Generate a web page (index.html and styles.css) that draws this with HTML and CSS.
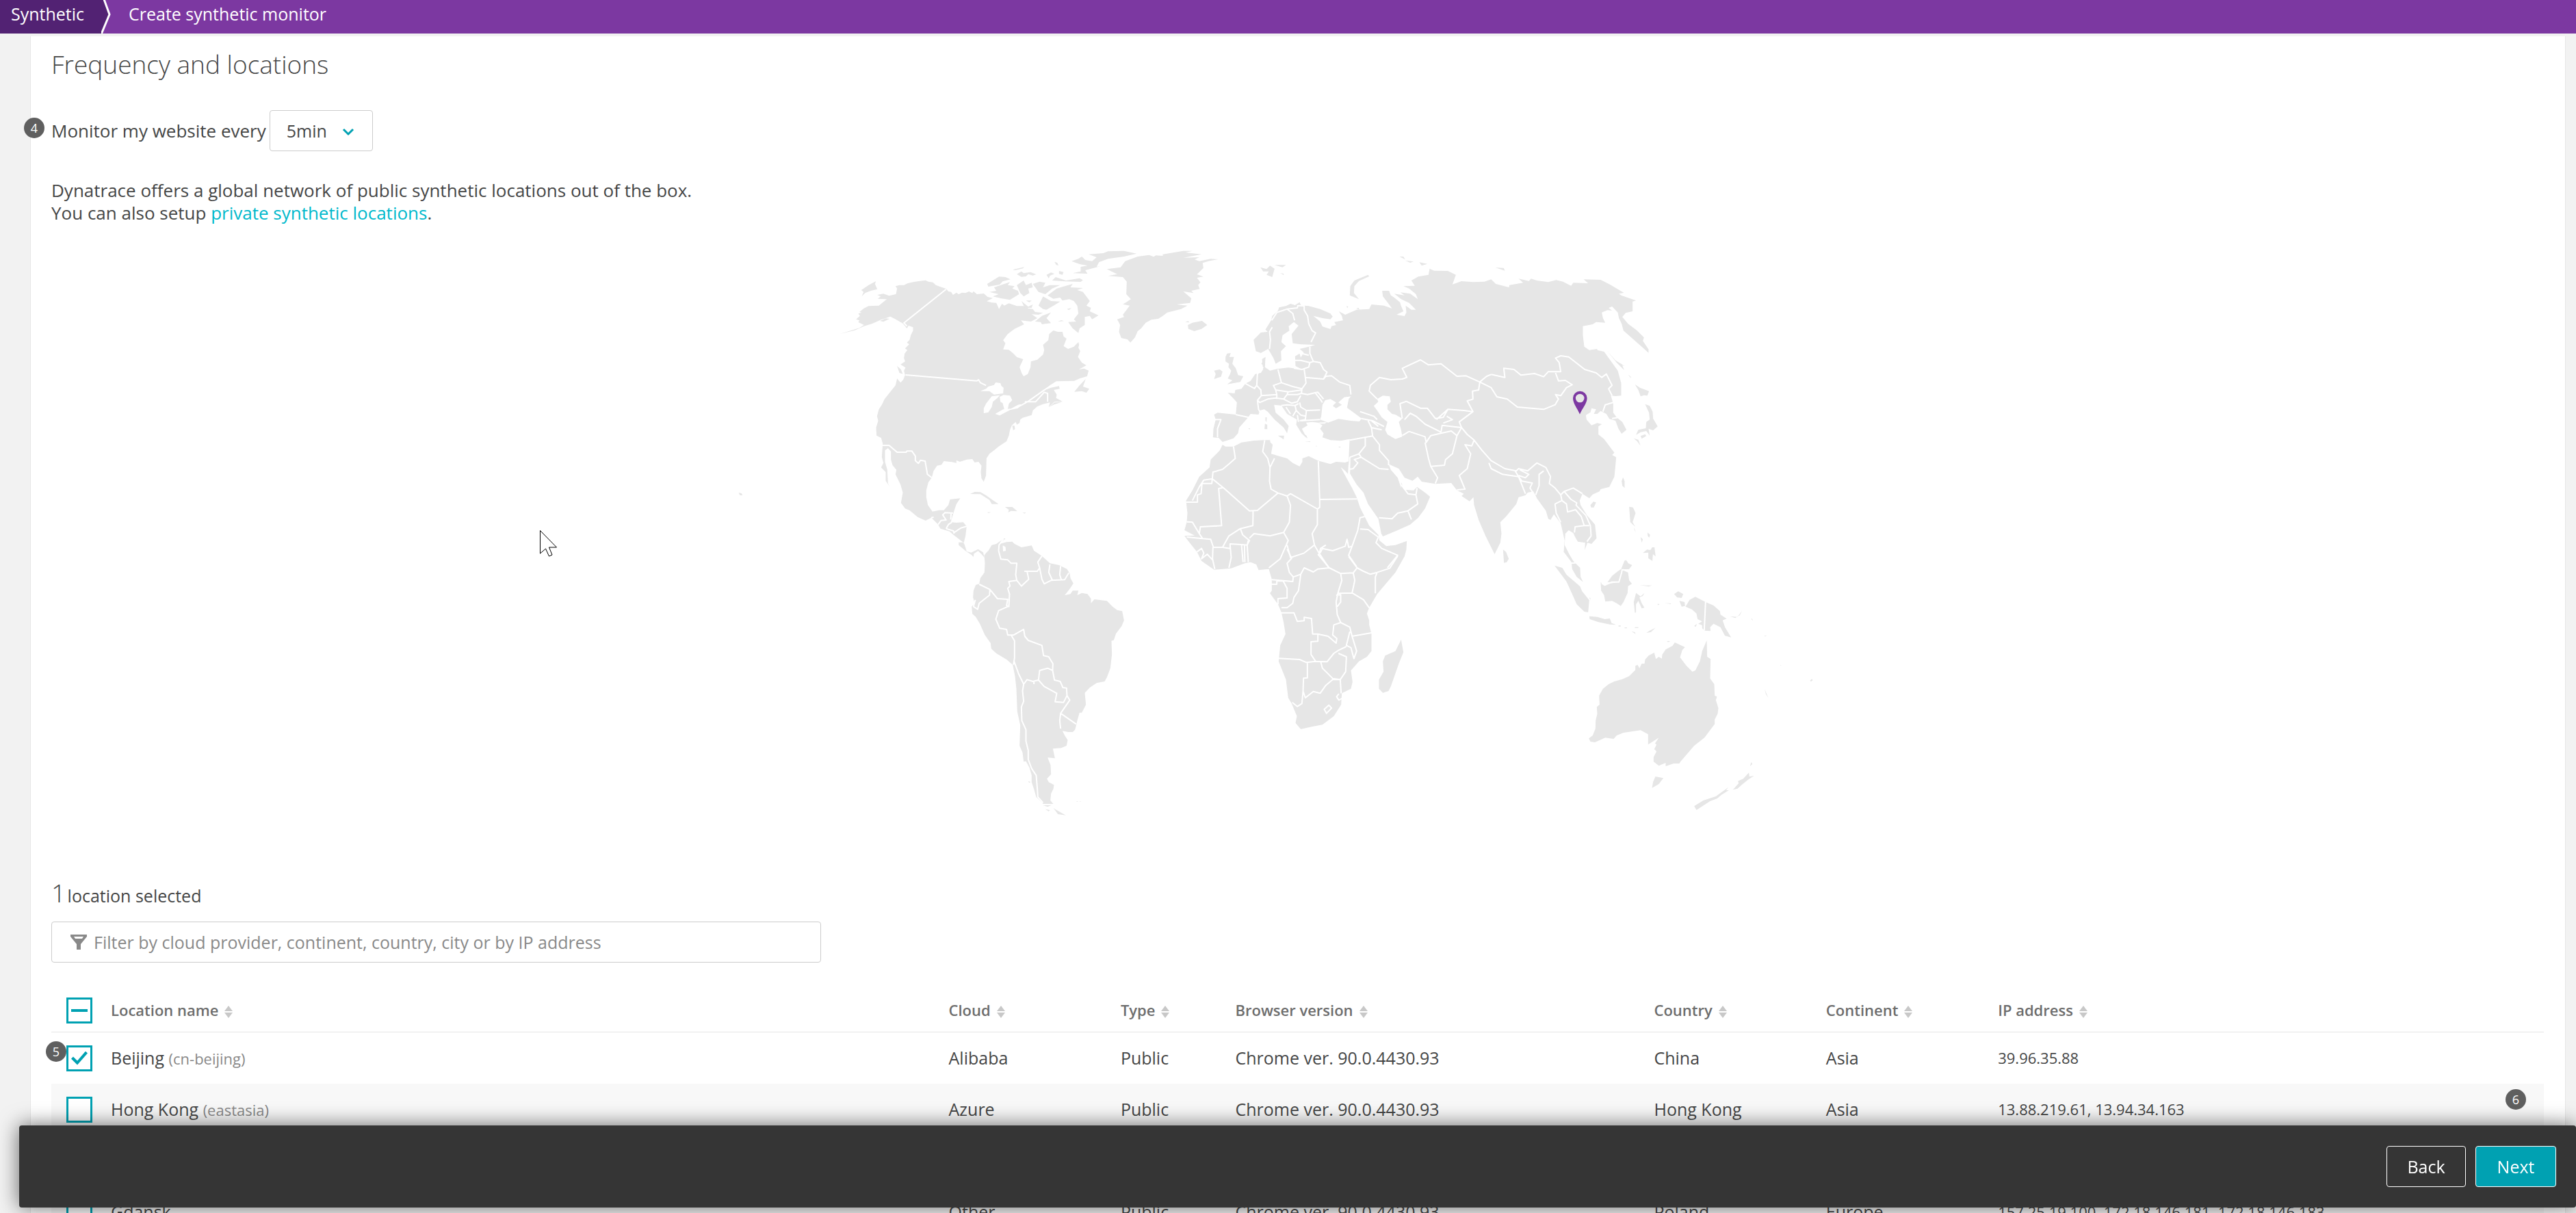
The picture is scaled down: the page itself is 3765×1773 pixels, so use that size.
FILE: index.html
```html
<!DOCTYPE html>
<html lang="en">
<head>
<meta charset="utf-8">
<title>Create synthetic monitor</title>
<link rel="stylesheet" href="styles.css">
</head>
<body>
<svg width="0" height="0" class="defs" aria-hidden="true">
  <symbol id="sort" viewBox="0 0 12 18"><path d="M0 8L6 0l6 8zM0 10h12l-6 8z" fill="#c8c8c8"/></symbol>
</svg>
<div class="app">
  <nav class="crumbs">
    <a class="crumb crumb-root" href="#">Synthetic</a>
    <svg class="crumb-arrow" width="15" height="49" viewBox="0 0 15 49"><path d="M0 0h4l8 21L0 49z" fill="#522273"/><path d="M4 -1L12 21 0 50" fill="none" stroke="#fff" stroke-width="3"/></svg>
    <a class="crumb" href="#">Create synthetic monitor</a>
  </nav>
  <main class="card">
    <h1>Frequency and locations</h1>
    <div class="frequency">
      <span class="badge badge-frequency">4</span>
      <label for="interval">Monitor my website every</label>
      <div class="select">
        <select id="interval"><option>5min</option></select>
        <svg width="18" height="12" viewBox="0 0 18 12"><path d="M2 2l7 7 7-7" fill="none" stroke="#00a1b2" stroke-width="3"/></svg>
      </div>
    </div>
    <p class="intro">Dynatrace offers a global network of public synthetic locations out of the box.<br>You can also setup <a href="#">private synthetic locations</a>.</p>

    <svg class="map" viewBox="1067 340 1660 900" role="img" aria-label="World map of locations">
      <g transform="translate(1220 350) scale(.33333)">
        <!-- North America -->
        <g class="land">
          <path d="M268 205L285 200 305 200 320 193 345 187 375 182 400 179 412 185 432 188 445 200 465 208 490 216 500 228 512 230 520 243 535 233 545 240 560 233 575 235 590 228 605 235 610 227 625 240 655 237 672 252 695 257 668 271 690 277 710 278 722 305 735 282 745 290 765 280 800 292 835 292 850 302 870 305 880 318 915 322 895 330 865 328 890 345 862 360 818 355 832 372 790 392 760 415 740 442 750 455 740 482 765 484 785 500 800 516 828 525 812 560 822 588 830 600 848 590 860 560 862 535 890 527 915 505 920 485 915 462 938 442 942 415 960 399 980 405 1000 405 1005 425 1018 435 1005 468 1025 480 1050 470 1070 450 1073 462 1070 475 1078 490 1068 515 1085 540 1105 552 1072 570 1095 566 1115 575 1108 600 1075 610 1052 620 975 622 945 640 922 660 950 650 985 643 988 655 962 660 975 680 972 695 1000 710 965 712 940 735 945 715 915 722 890 732 870 750 865 770 825 782 815 790 812 805 800 812 795 800 778 815 770 835 765 860 755 885 740 895 720 908 700 925 680 940 667 960 665 1035 655 1063 645 1048 642 1020 645 992 632 975 615 978 605 963 580 965 550 975 535 968 535 980 515 976 480 972 470 988 450 992 435 1015 427 1045 412 1065 403 1100 403 1130 410 1165 430 1193 460 1187 480 1187 500 1165 507 1140 552 1135 535 1160 525 1190 510 1240 535 1242 565 1240 580 1258 575 1300 568 1328 580 1368 600 1373 630 1358 652 1372 658 1395 645 1380 630 1366 612 1378 610 1392 600 1382 578 1368 545 1340 545 1328 565 1328 522 1295 505 1280 465 1268 455 1250 425 1220 400 1233 365 1217 330 1188 310 1180 292 1155 300 1110 290 1075 268 1030 272 1010 255 990 248 965 248 930 235 915 222 925 222 975 232 1010 235 1070 244 1087 225 1058 225 1020 205 1000 215 980 208 955 212 895 205 870 185 860 183 825 192 795 187 775 195 745 208 725 220 700 250 662 268 640 275 610 290 628 302 615 310 595 305 575 312 562 290 548 310 535 305 520 308 500 320 485 310 478 328 460 318 452 330 440 335 420 345 400 345 385 325 378 318 390 300 368 265 348 245 338 205 352 165 370 130 380 90 398 25 414 110 388 130 375 105 363 110 355 95 350 112 335 105 325 120 320 110 318 128 303 150 292 195 290 230 262 190 260 203 250 188 243 215 238 240 247 270 240 275 215z"/>
          <path d="M118 222L150 200 182 183 178 195 188 218 160 225 135 235 120 250 128 230zM200 357L225 346 242 348 215 361zM275 555L292 570 300 590 285 585zM1052 668L1075 640 1102 612 1090 645 1118 655 1105 672 1085 665zM942 735L965 715 1000 712 960 725zM660 663l15-8 10 4zM780 817l10 0 2 15-8 5z"/>
          <path d="M670 195L722 163 750 165 772 175 738 184 725 198 675 207zM680 230L710 225 700 210 770 187 760 200 790 205 780 215 805 225 810 240 770 265 730 258 695 250 720 240zM800 200l30-20 10 20 25-10 5 20-20 5 5 20-25 15-15-15zM782 133l50-12-5 6-35 8zM800 152l20-12 10 8 30-5 25 10-15 5-20-6-10 10-20 2zM930 155l20-10 15 6-20 8-5 12zM965 98l12 4 6 12-10-2zM985 138l20 5-5 12-15-4zM870 195l30-10 25 5-10 20 30-10 45 0-35 15-30 25-30-10zM955 180l15-15 45 15 60-10 15 8-10 8-70-2z"/>
          <path d="M935 245L975 215 1010 205 1045 195 1035 210 1090 213 1065 222 1090 230 1120 270 1105 290 1125 300 1120 315 1158 333 1130 350 1120 335 1098 340 1098 375 1075 390 1070 410 1045 390 1025 362 1060 360 1050 350 1070 325 1065 290 1050 270 1030 262 1000 268 990 255 960 260zM895 290L915 250 950 270 990 272 970 285 930 308 915 305zM820 270l30 25 20-10-5 15-30 0zM840 268l25 0-10 8zM880 360l30-25 40-15-20 25 20 22-40 5-5-10zM980 360l15-6 12 4zM1020 305l20-5-12 10z"/>
          <path d="M1115 65L1180 60 1200 52 1270 50 1325 62 1270 75 1200 85 1160 100 1150 120 1165 118 1100 135 1110 150 1045 148 1080 140 1080 120 1110 115 1075 108 1040 95 1070 85 1085 75 1100 90 1130 95 1150 78z"/>
          <path d="M595 1116L615 1107 640 1108 665 1122 690 1140 720 1160 690 1160 680 1142 640 1117zM748 1173L780 1173 802 1192 775 1190 762 1197 765 1185zM670 1196l16 0-10 4zM825 1198l15 0-5 4z"/>
        </g>
        <path class="water" d="M640 665L665 655 675 645 700 638 707 627 728 630 732 642 742 650 740 675 700 680 680 665zM665 720L690 688 725 683 715 695 695 712 690 735 675 758 655 762 655 740zM725 690L742 682 770 685 780 705 765 720 760 745 745 745 738 718 728 712zM705 765L740 745 775 742 805 725 820 722 805 740 770 748 725 772z"/>
        <g class="border">
          <path d="M490 218L305 366 318 380M312 594L625 620 632 615 640 628 665 640M800 738L850 710 925 657 975 624M835 712H882L920 670 935 675 935 712M210 903H240L275 933H315L318 928H340L355 950 355 970 368 982 378 968 398 972 408 1030 427 1045M425 1220L435 1218M455 1250L468 1232 490 1230 475 1208 485 1198 520 1200M510 1228L512 1200M490 1268L500 1250 515 1240M490 1268L522 1278 525 1290M525 1285L555 1265 580 1258M568 1328L580 1345"/>
        </g>
        <!-- Greenland -->
        <path class="land" d="M1275 95L1330 75 1380 68 1400 76 1410 70 1440 72 1440 65 1530 50 1570 50 1540 57 1610 65 1530 80 1600 78 1580 88 1600 95 1650 85 1682 87 1640 95 1615 103 1618 125 1590 153 1618 163 1590 168 1605 188 1595 200 1602 217 1565 225 1575 235 1530 228 1565 258 1560 278 1500 285 1548 290 1520 305 1460 320 1440 335 1420 348 1390 352 1365 365 1345 390 1330 402 1318 430 1298 452 1285 438 1258 432 1248 405 1253 375 1240 350 1270 340 1265 330 1295 290 1265 284 1280 275 1300 262 1280 240 1282 185 1265 165 1200 160 1240 152 1215 140 1195 130 1255 122z"/>

        <!-- Europe, Asia and northern Africa -->
        <g transform="translate(1440 0)">
          <g class="land">
            <path d="M510 298L540 292 560 282 580 288 600 275 605 287 620 290 640 292 690 305 735 325 745 338 735 350 700 345 660 335 690 360 700 382 735 393 740 380 760 375 752 362 790 355 785 335 772 315 800 330 850 308 905 305 915 285 970 290 1005 303 985 275 965 250 962 225 992 225 1000 245 1015 255 1040 275 1045 292 1055 315 1025 330 1060 336 1068 320 1065 290 1090 308 1110 308 1080 278 1045 262 1015 238 1060 245 1042 232 1085 238 1118 262 1110 240 1080 215 1055 205 1105 203 1090 180 1120 163 1165 155 1170 128 1190 137 1250 138 1285 155 1270 197 1310 183 1360 187 1410 185 1440 175 1460 195 1518 210 1520 200 1580 190 1560 172 1605 182 1615 172 1640 180 1690 187 1725 178 1755 185 1790 203 1800 190 1865 192 1845 175 1920 177 1960 197 2022 234 2000 238 2010 245 2075 268 2060 272 2060 315 2030 322 2015 340 2040 370 2078 398 2110 430 2105 445 2130 482 2130 497 2060 435 2020 400 2012 370 2000 345 1995 320 1970 294 1955 300 1970 312 1950 310 1925 320 1930 345 1940 365 1900 362 1885 372 1842 380 1842 420 1848 470 1870 485 1905 480 1905 485 1935 492 1955 520 1995 575 2010 630 2010 685 1985 687 1965 685 1975 720 1975 760 1990 780 2015 800 2033 835 2012 852 1998 830 1985 795 1958 787 1945 765 1920 752 1905 765 1890 765 1900 745 1880 740 1875 758 1855 770 1858 790 1880 815 1905 805 1925 810 1910 820 1910 855 1935 875 1960 908 1980 935 1970 945 1988 955 1985 990 1980 1040 1958 1085 1920 1095 1915 1105 1885 1118 1870 1135 1840 1115 1828 1145 1832 1165 1860 1210 1895 1250 1902 1310 1880 1335 1862 1330 1850 1362 1852 1330 1820 1325 1808 1305 1800 1288 1780 1275 1765 1290 1762 1340 1785 1385 1800 1410 1830 1440 1832 1480 1843 1502 1815 1480 1795 1445 1792 1415 1758 1370 1762 1320 1745 1245 1715 1205 1700 1230 1690 1225 1680 1190 1640 1135 1625 1105 1600 1110 1590 1122 1560 1130 1550 1160 1505 1215 1480 1240 1485 1290 1480 1330 1455 1380 1440 1350 1415 1300 1385 1230 1365 1165 1362 1130 1345 1148 1310 1125 1320 1115 1290 1100 1265 1068 1195 1072 1135 1062 1118 1040 1095 1058 1060 1045 1035 1005 990 985 1000 1010 1030 1045 1045 1090 1045 1065 1060 1098 1100 1100 1115 1085 1150 1110 1172 1128 1150 1180 1120 1220 1085 1250 1030 1275 965 1302 958 1290 945 1225 900 1160 880 1110 850 1075 820 1025 815 970 818 900 820 875 780 883 735 880 700 868 705 850 690 830 700 815 680 803 655 800 628 803 635 815 610 830 632 872 608 850 585 812 588 790 545 765 520 728 488 725 495 760 530 790 552 818 545 850 530 825 490 790 460 755 445 745 425 750 420 768 385 765 370 785 335 825 330 850 310 872 262 888 245 870 220 868 222 830 232 790 225 768 240 760 320 768 325 715 312 700 285 672 315 675 318 660 345 655 362 632 385 620 405 590 430 585 440 570 435 525 450 515 448 560 470 575 500 568 550 562 610 570 582 555 580 512 600 500 605 518 618 495 600 480 650 468 668 462 605 460 570 455 565 415 595 378 575 362 552 380 555 400 525 420 520 450 540 468 518 490 520 530 495 545 485 520 462 480 430 498 408 490 398 440 430 408 460 405 450 395 475 355 480 335 505 312z"/>
            <path d="M110 375L130 365 172 357 195 375 170 392 138 402 112 392zM98 362l14-4 4 6zM275 515L282 500 298 498 292 515 312 515 305 545 320 565 330 595 353 600 340 625 282 635 305 618 285 610 295 590 300 575 288 560 290 545 275 535zM225 575L250 570 262 580 255 602 225 612 232 590zM432 545L450 515 445 555zM505 860L532 860 530 877zM448 808L458 812 458 832 446 832zM450 780l6 0-1 20-5-5zM375 828l8 0-3 5zM670 905l5 0-1 4zM615 850l15 10 5 12-12-8zM770 908l12 1-8 4zM622 885l25 0 0 3z"/>
            <path d="M428 122L455 130 470 115 490 128 480 165 455 155 465 140 440 140zM490 112L540 112 525 122zM515 148l15 2 0 6zM820 245L822 205 840 180 900 155 905 162 860 182 840 205 838 235 860 262zM1038 75L1055 75 1063 88zM1063 92L1100 97 1085 102zM1125 100L1160 107 1135 115zM1458 123L1495 125 1500 137zM805 293l8 0-3 8zM848 303l10-3 5 8z"/>
            <path d="M1948 488L1985 530 2025 555 2015 552 2023 573 1990 540zM2040 592l12 10 0 6zM2070 635L2092 650 2132 665 2125 685 2110 683 2095 688 2085 660zM2115 722L2135 730 2148 755 2150 785 2170 820 2150 837 2130 830 2135 860 2120 840 2095 845 2075 857 2085 835 2118 828 2120 800 2135 790 2132 760zM2095 862l20-8 5 8-20 12zM2065 872L2085 878 2095 905 2080 885zM2012 1060L2018 1043 2025 1060 2025 1090 2015 1080zM1875 1165L1888 1150 1900 1153 1890 1175 1878 1175zM1492 1360L1505 1370 1517 1400 1508 1415 1496 1418z"/>
            <path d="M2045 1172L2062 1175 2073 1200 2060 1240 2072 1260 2050 1240 2048 1215zM2066 1262l8 22-6-10zM2095 1305l10 10-5 15zM2125 1285l12 10-4 12-6-6zM2105 1375l18-15 15 2 8-12 10 0 5 40-12-10-2 30-18-12 0-25zM2012 1440L2025 1408 2035 1410 2045 1430 2055 1430 2040 1440z"/>
            <path d="M262 900L275 908 310 908 345 890 400 882 445 880 470 880 472 890 482 900 475 940 510 950 545 960 570 980 600 995 612 975 612 960 640 950 680 970 735 985 760 975 800 978 815 973 812 1028 800 1015 780 998 805 1045 830 1090 850 1130 865 1175 885 1215 905 1255 945 1295 950 1320 980 1345 1020 1340 1070 1322 1068 1360 1060 1390 1020 1460 940 1555 905 1615 895 1640 905 1670 905 1690 915 1730 915 1805 895 1830 860 1850 825 1890 832 1940 825 1970 785 1990 782 2040 750 2090 700 2128 660 2135 605 2147 582 2120 588 2090 565 2035 550 2010 540 1930 508 1850 515 1780 538 1730 530 1680 520 1635 505 1600 470 1552 478 1540 478 1490 465 1445 420 1450 410 1425 385 1415 360 1420 300 1442 225 1448 170 1410 150 1370 110 1320 95 1300 140 1298 95 1275 105 1240 108 1200 102 1145 130 1100 160 1040 205 1000 210 965 250 925z"/>
            <path d="M1045 1755L1055 1810 1035 1860 1000 1960 990 1980 965 1988 948 1970 948 1930 968 1895 965 1850 975 1825 1020 1805z"/>
          </g>
          <path class="water" d="M940 700L965 685 995 688 1000 712 985 725 985 745 1005 765 1020 768 1050 785 1035 800 1045 835 1050 865 1020 875 985 855 975 835 985 800 960 780 940 750 925 730 945 712zM695 775L690 790 725 803 770 787 825 795 862 798 872 785 845 765 808 738 815 700 825 688 795 692 770 715 785 725 760 740 745 730 760 715 735 700 712 705 700 725zM680 803l40-2-10 7-20 0z"/>
          <g class="border">
            <path d="M480 385L468 405 472 440 468 480M478 355L500 320 525 312 545 305 570 325 578 355M545 305L590 300 592 290 620 292 620 310 635 335 640 370 655 400 670 410 650 450M645 470L645 500 660 535 645 540 605 530 580 530M590 495L640 508M575 565L610 570 640 560 645 540M660 535L690 540 705 570 720 582 705 612 625 605 620 570M705 612L715 600 740 598 775 625 820 640 825 680M625 605L628 630 610 655 608 675 635 680 668 672 690 700 700 715M668 672L680 670 705 700M610 655L570 645 520 628 505 570M520 628L485 640 495 660 550 668 610 660M495 660L500 680 430 685M440 560L415 590 412 640 400 655M412 640L430 660 432 685 415 705M362 632L405 655M415 705L425 715 460 700 495 695 530 700 545 680 550 668M500 680L500 700M545 680L590 680 608 675M415 705L420 745 425 755M530 700L565 718 590 712 605 685M600 715L605 735 630 750 690 748M630 750L625 790 600 795M520 728L545 725 580 728 585 750 570 775M540 735L560 765M580 728L595 720M585 750L605 770 625 775M590 770L595 800M605 795L690 790M320 768L375 780M228 790L255 790 240 830 240 868M865 755L925 775 940 790M870 785L920 795 970 820M900 795L915 825 960 835M915 795L945 820M820 880L920 862 915 825M920 862L950 900 950 925 990 970 990 990M888 870L888 905 860 940 820 955M860 940L870 955 950 1005 990 1008M870 955L840 965 855 980 835 1005 818 1008M820 955L818 1028M1045 1075L1075 1115 1110 1120 1115 1090M1110 1120L1118 1160 1075 1190 1090 1228M1075 1190L1030 1200 1005 1225 948 1220"/>
            <path d="M940 700L905 665 910 640 950 605 1000 615 1050 612 1070 605 1050 565 1130 528 1165 550 1220 545 1290 600 1330 598 1390 625 1420 600 1440 592M1390 625L1440 650 1465 690 1510 700 1555 735 1670 745 1720 725 1735 700 1722 680 1745 685 1770 650 1795 637 1765 618 1735 620 1722 585M1440 592L1500 605 1495 565 1540 570 1570 595 1630 588 1670 602 1690 580 1745 580 1738 540 1722 520 1745 510 1780 515 1850 570 1900 585 1925 605 1945 590 1970 640 1955 655 1970 685M1390 625L1385 660 1358 665 1360 700 1335 708 1360 755 1320 750 1250 745 1200 790M1050 785L1040 720 1068 710 1130 740 1160 740 1195 785 1230 780 1250 745M1060 790L1085 762 1110 775 1150 810 1220 845M1360 755L1300 800 1310 825 1225 815 1220 845M1245 775L1270 790 1230 805M1050 860L1080 842 1150 865 1155 890 1175 860 1220 850 1265 840 1290 860 1270 940 1240 965 1235 990 1175 995 1205 1045 1195 1070M1150 890L1165 960 1175 995M1290 860L1310 825 1335 855 1365 880 1355 905 1325 900 1350 940 1335 1005 1300 1035 1325 1095 1290 1098M1365 880L1400 925 1440 970 1500 1005 1550 1015 1560 1005 1600 1015 1640 980 1680 1000 1700 1040 1695 1070 1720 1090 1745 1120 1760 1105 1800 1090 1840 1115M1430 980L1440 1005 1490 1030 1560 1040 1545 1015M1560 1040L1590 1115M1560 1040L1575 1060 1620 1068 1610 1090 1635 1130M1565 1010L1605 1030 1590 1045 1560 1035M1635 1120L1650 1080 1650 1030 1670 1015M1745 1120L1750 1145 1720 1160 1725 1200 1745 1240M1750 1145L1770 1160 1775 1195 1810 1185 1835 1215 1848 1255 1808 1260 1805 1285M1760 1105L1790 1140 1815 1155 1812 1165 1855 1210 1875 1255 1878 1300 1860 1325M1848 1255L1870 1255M1975 715L1940 725 1930 755M1970 785L2000 780"/>
            <path d="M310 908L318 960 290 985 262 1008 220 1020 215 1070 172 1070 168 1115 152 1120 152 1152 102 1152M215 1050L180 1055 160 1085 130 1145M215 1048L265 1088 380 1190 415 1188 505 1112 475 1095 468 1060 470 1000 460 960 438 930 447 880M470 1000L490 960M505 1112L545 1125 560 1115 678 1182 688 1175 688 1140 682 972M688 1140L852 1138M265 1088L245 1092 258 1255 165 1260 160 1290 130 1240 105 1238M396 1190L395 1255 340 1268 290 1300 262 1350 222 1350 210 1315 175 1312 160 1290M175 1312L105 1305M395 1255L340 1268 350 1295 380 1320 370 1340 375 1415M545 1125L560 1165 555 1240 530 1285 550 1320 515 1400 465 1440M380 1310L400 1290 470 1300 530 1285M678 1182L678 1250 655 1290 665 1340 620 1375 560 1395 545 1340M665 1340L685 1375 725 1435M690 1375L700 1355 745 1365 800 1345 808 1315 815 1350 830 1345 855 1275 865 1220 885 1215M865 1270L900 1272 945 1305 935 1330 960 1355 1030 1385 985 1440M830 1345L815 1385 850 1435M262 1350L295 1355 295 1335 345 1338 352 1415M345 1338L370 1340 375 1320M295 1340L300 1395 290 1440M220 1350L218 1400 228 1445M150 1370L170 1355 180 1375 170 1400 195 1380 218 1405M360 1415L358 1340"/>
          </g>
        </g>
      </g>

      <!-- Southern Africa borders -->
      <g class="border" transform="translate(1720 780) scale(.33333)">
        <path d="M485 68L505 108 485 130 495 170 512 190 545 178 560 150 600 168 620 155 670 150 620 90M512 190L510 210 418 202M545 178L535 250 515 280 510 305 485 325 460 325M670 150L720 175 725 205 708 260 700 300 705 355 720 390 760 410 770 450 855 435M720 175L775 172 792 150 820 165 850 178 880 170M655 50L632 65 625 90M792 150L755 100M880 170L935 152 970 98M880 170L872 190 872 262M775 172L782 205 770 260 708 262M770 260L820 290 845 325M415 222H440V208H468L485 240 485 282 445 285 445 310M700 270L720 268 720 300 705 320M460 347H515L530 385 560 382 560 367 592 372 597 440 620 440 620 472 590 474 590 530 610 560 570 565 540 552 448 547M620 440L665 450 700 480 703 460 685 445 690 400 720 390M770 450L790 515 778 548 765 500 745 490 760 430M745 495L710 512 690 525 660 562 610 560M710 525L745 540 742 605 718 640 685 635 640 590 632 560M574 565L574 632 557 634 555 690 565 720 600 692 630 700 655 665 685 640 718 640 722 700M555 690L550 745 530 758 508 740M712 702L702 715 712 730 727 722M648 770L668 752 680 765 658 788z"/>
      </g>

      <!-- South America -->
      <g transform="translate(1360 740) scale(.33333)">
        <path class="land" d="M237 215L245 205 255 195 270 170 290 165 325 140 330 142 305 165 335 157 360 155 370 165 400 180 445 172 455 195 475 208 490 218 525 250 565 258 600 275 612 295 615 315 628 338 612 362 590 390 615 385 625 370 650 370 645 390 665 380 690 385 705 405 705 425 720 408 775 415 800 440 820 455 842 460 850 500 840 525 815 558 805 587 795 590 797 650 790 710 775 750 765 768 730 775 700 795 678 818 683 870 665 905 655 905 645 940 640 962 635 980 625 990 605 990 580 985 590 1005 603 1025 598 1050 575 1060 538 1063 547 1105 515 1102 528 1135 530 1175 512 1195 520 1210 543 1222 540 1240 530 1260 527 1290 540 1305 495 1305 490 1298 465 1275 455 1240 445 1210 445 1180 435 1145 420 1118 410 1120 405 1080 392 1050 395 960 382 900 378 800 372 745 362 695 335 672 290 645 268 625 265 600 240 565 218 515 200 485 185 472 182 440 195 425 188 400 190 370 200 345 215 340 220 315 238 290 240 250zM495 1311L532 1310 515 1318zM540 1322L550 1330 595 1355 560 1350zM505 1328l20 4-5 6zM430 1205l10 4-6 4zM640 1295l6-2 2 3zM655 1293l6 2-4 2z"/>
        <path class="water" d="M318 172L330 178 332 195 320 198z"/>
        <path class="border" d="M322 142L302 170 300 195 310 232 340 235 355 250 380 250 375 300 380 325 345 330 350 350 340 360 348 385 345 440 335 435 340 408 295 405 262 365 215 342M380 325L400 350 432 320 425 285 415 285 470 285 480 270 472 245 490 218M480 270L490 320 500 340 530 325 590 322 608 292M525 255L520 290 535 322M572 262L568 300 575 322M262 365L260 390 215 425 208 452 190 440 198 410M340 440L300 458 288 495 305 535 335 540 340 565 365 565 410 540 415 570 430 588 490 610 497 655 520 660 538 690 537 720 545 762 570 768 582 795 598 797 600 830 612 850 572 908 640 955M355 565L370 590 370 665 365 695M368 680L388 735 410 780 405 810 410 855 400 880 402 940 420 980 420 1030 430 1070 430 1110 445 1150 465 1180 470 1240 472 1275 495 1300M410 780L425 760 450 768 475 762 480 720 515 710 537 720M475 762L500 790 555 820 548 857 585 860 600 830M572 908L568 940 572 975M455 770V780"/>
      </g>

      <!-- Oceania and Indonesia -->
      <g transform="translate(2180 740) scale(.33333)">
        <g class="land">
          <path d="M428 1018L445 1005 457 975 458 940 465 910 463 880 475 870 473 830 490 800 515 780 540 768 575 758 605 745 632 718 632 700 642 695 650 710 660 690 672 690 675 672 690 655 715 642 722 670 735 660 748 668 750 650 765 628 795 612 805 597 850 618 838 630 828 662 855 698 882 725 895 720 915 680 925 635 945 588 947 660 962 670 960 755 978 780 980 830 990 835 985 850 996 885 993 910 980 935 980 955 935 1015 890 1050 830 1120 825 1128 800 1128 765 1140 765 1125 735 1138 712 1120 712 1100 725 1075 715 1065 725 1045 718 1040 735 1015 688 1045 688 1000 655 982 615 988 580 993 550 1005 537 1020 500 1015 455 1035 435 1032zM720 1185L755 1192 735 1218 705 1235 710 1208zM890 1315L930 1290 985 1272 1040 1232 1030 1245 1042 1245 1010 1265 990 1282 960 1293 900 1332zM1060 1243L1085 1215 1082 1205 1105 1195 1130 1168 1132 1185 1152 1182 1125 1200 1100 1220 1080 1238zM1135 1140L1140 1122 1145 1130z"/>
          <path d="M852 440L870 410 895 397 940 420 975 435 1003 460 1005 475 1032 493 1015 500 1025 530 1052 575 1025 568 1005 530 975 515 960 530 962 547 935 545 925 535 925 522 908 515 925 505 905 495 900 470 880 452zM802 385L820 373 842 385 835 402 815 400zM825 415L848 420 850 437 835 440zM890 525l12-10-5 14zM1048 483L1080 485 1100 458 1090 478 1070 490zM1142 490l6 12-6-5zM1198 800L1215 840 1205 825zM1398 765l8-8 4 6-8 6zM1268 695l4 3-3 2zM1198 568h8v2h-8z"/>
          <path d="M278 260L312 270 330 300 365 330 390 352 398 372 430 412 425 465 408 462 375 430 355 385 330 330zM430 482L465 485 498 495 520 492 528 512 548 520 520 518 470 508 432 495zM558 523h10v4h-10zM585 531h10v4h-10zM615 548L630 552 633 560zM630 530h15v4h-15zM680 555L695 545 720 533 700 552zM480 333L495 345 515 340 560 332 575 280 600 290 605 325 617 340 600 350 598 380 580 420 568 437 550 425 530 415 500 418 495 390 482 370zM510 333L530 305 555 285 570 275 590 235 600 250 618 258 605 275 575 282 560 330zM630 468L625 420 635 380 655 395 672 380 665 393 650 400 660 425 672 445 660 448 645 415 635 430 635 465zM650 345L680 347 705 347 690 352zM728 428l10 0-5 6zM760 424l28 2 0 3zM772 591h10v4h-10zM430 400l5 3v8z"/>
        </g>
        <path class="border" d="M940 418L934 545M484 337L498 346 530 332 560 332 572 290 574 278 600 280M350 250L370 248"/>
      </g>
      <path class="land" d="M1080 720l4 1 2 3-4 0z"/>
      <path d="M2309.500 605.500C2306 597 2299.500 590 2299.500 582a10.300 10.300 0 0 1 20.600 0C2320 590 2313 597 2309.500 605.500z" fill="#7c38a1"/>
      <circle cx="2309.700" cy="582" r="6.300" fill="#e6e6e6"/>
    </svg>

    <p class="summary"><span class="count">1</span> location selected</p>
    <div class="filter">
      <svg width="24" height="22" viewBox="0 0 24 22"><path d="M0 0h24v3l-9 11v8H9v-8L0 3zM5 3l2 3h10l2-3z" fill="#898989" fill-rule="evenodd"/></svg>
      <input type="text" aria-label="Filter locations" placeholder="Filter by cloud provider, continent, country, city or by IP address">
    </div>
    <table>
      <colgroup><col class="c-check"><col><col class="c-cloud"><col class="c-type"><col class="c-browser"><col class="c-cloud"><col class="c-cloud"><col class="c-ip"></colgroup>
      <thead>
        <tr>
          <th><input class="mixed" type="checkbox" aria-label="Select all locations"></th>
          <th>Location name<svg class="sort"><use href="#sort"/></svg></th>
          <th>Cloud<svg class="sort"><use href="#sort"/></svg></th>
          <th>Type<svg class="sort"><use href="#sort"/></svg></th>
          <th>Browser version<svg class="sort"><use href="#sort"/></svg></th>
          <th>Country<svg class="sort"><use href="#sort"/></svg></th>
          <th>Continent<svg class="sort"><use href="#sort"/></svg></th>
          <th>IP address<svg class="sort"><use href="#sort"/></svg></th>
        </tr>
      </thead>
      <tbody>
        <tr>
          <td><span class="badge badge-row">5</span><input type="checkbox" checked aria-label="Beijing"></td>
          <td>Beijing <small>(cn-beijing)</small></td><td>Alibaba</td><td>Public</td><td>Chrome ver. 90.0.4430.93</td><td>China</td><td>Asia</td><td class="ip">39.96.35.88</td>
        </tr>
        <tr>
          <td><input type="checkbox" aria-label="Hong Kong"></td>
          <td>Hong Kong <small>(eastasia)</small></td><td>Azure</td><td>Public</td><td>Chrome ver. 90.0.4430.93</td><td>Hong Kong</td><td>Asia</td><td class="ip">13.88.219.61, 13.94.34.163<span class="badge badge-next">6</span></td>
        </tr>
        <tr><td></td><td></td><td></td><td></td><td></td><td></td><td></td><td></td></tr>
        <tr>
          <td><input type="checkbox" aria-label="Gdansk"></td>
          <td>Gdansk</td><td>Other</td><td>Public</td><td>Chrome ver. 90.0.4430.93</td><td>Poland</td><td>Europe</td><td class="ip">157.25.19.100, 172.18.146.181, 172.18.146.183</td>
        </tr>
      </tbody>
    </table>
  </main>
  <footer class="actions">
    <button type="button">Back</button>
    <button type="button" class="primary">Next</button>
  </footer>
  <svg class="cursor" width="28" height="42" viewBox="0 0 28 42"><path d="M1.500 1.500V35L9.500 28l5 11 4.500-2-4.500-11H25.500z" fill="#fff" stroke="#000" stroke-width="1"/></svg>
</div>
</body>
</html>
```
FILE: styles.css
```css
* { box-sizing: border-box; }
body { margin: 0; background: #f2f2f2; color: #454646; font: 26px/33px "Open Sans", "Noto Sans", sans-serif; }
.defs { position: absolute; }
.app { height: 100vh; overflow: hidden; }

.crumbs { display: flex; height: 49px; background: #7c38a1; }
.crumb { color: #fff; text-decoration: none; font-size: 25px; font-weight: 500; line-height: 40px; padding-left: 25px; }
.crumb-root { background: #522273; width: 148px; padding-left: 16px; }

.card { margin: 4px 15px 0 44px; padding: 17px 31px 0 30px; background: #fff; border-left: 1px solid #e6e6e6; border-right: 1px solid #e6e6e6; }
h1 { margin: 0; font-size: 37px; line-height: 48px; font-weight: 300; }

.frequency { position: relative; display: flex; align-items: center; gap: 5px; margin-top: 43px; }
.select { position: relative; display: flex; align-items: center; }
.select select { appearance: none; width: 151px; height: 60px; padding: 0 24px; border: 1px solid #ccc; border-radius: 4px; background: #fff; color: inherit; font: inherit; font-size: 25px; }
.select svg { position: absolute; right: 27px; top: 26px; pointer-events: none; }

.badge { position: absolute; width: 30px; height: 30px; border-radius: 50%; background: #5f5f5f; color: #fff; font-size: 18px; line-height: 30px; text-align: center; }
.badge-frequency { left: -40px; top: 11px; }
.badge-row { left: -8px; top: 13px; }
.badge-next { right: 26px; top: 8px; }

.intro { margin: 41px 0 0; }
.intro a { color: #00b9cc; text-decoration: none; }

.map { display: block; width: 100%; height: 900px; margin-top: 12px; }
.land { fill: #e6e6e6; }
.water { fill: #fff; }
.border { fill: none; stroke: #fff; stroke-width: 6; stroke-linejoin: round; }

.summary { margin: 45px 0 0; font-size: 25px; line-height: 48px; }
.count { font-size: 37px; font-weight: 300; line-height: 37px; margin-right: -4px; }
.filter { display: flex; align-items: center; gap: 10px; width: 1125px; max-width: 100%; height: 60px; margin-top: 14px; padding: 0 27px; border: 1px solid #ccc; border-radius: 4px; }
.filter input { flex: 1; border: 0; outline: 0; padding: 0; background: none; color: inherit; font: inherit; font-size: 25px; }
.filter input::placeholder { color: #898989; opacity: 1; }

table { width: 100%; margin-top: 38px; border-collapse: separate; border-spacing: 0; table-layout: fixed; font-size: 25px; }
.c-check { width: 87px; }
.c-cloud { width: 6.9%; }
.c-type { width: 4.6%; }
.c-browser { width: 16.8%; }
.c-ip { width: 21.9%; }
th, td { position: relative; padding: 0; text-align: left; vertical-align: middle; white-space: nowrap; }
th { height: 64px; border-bottom: 1px solid #e6e6e6; color: #6d6d6d; font-size: 22px; font-weight: 600; }
td { height: 75px; }
tbody tr:nth-child(even) { background: #f8f8f8; }
small { color: #898989; font-size: 22px; }
.ip { font-size: 22px; }
.sort { width: 12px; height: 18px; margin-left: 9px; vertical-align: -3px; }

input[type="checkbox"] { appearance: none; display: grid; place-items: center; width: 38px; height: 38px; margin: 0 0 0 22px; border: 3px solid #00a1b2; background: #fff; }
input:checked::after { content: ""; width: 24px; height: 20px; background: #00a1b2; clip-path: polygon(0 11px, 3px 8px, 9px 14px, 21px 0, 24px 3px, 9px 20px); }
.mixed::after { content: ""; width: 24px; height: 4px; background: #00a1b2; }

.actions { position: fixed; left: 28px; right: 0; bottom: 8px; display: flex; align-items: center; justify-content: flex-end; gap: 14px; height: 120px; padding-right: 29px; border-radius: 4px; background: #353535; box-shadow: 0 0 30px rgba(0, 0, 0, .6); }
.actions button { width: 116px; height: 60px; padding: 0; border: 1px solid #fff; border-radius: 4px; background: none; color: #fff; font: inherit; font-size: 25px; }
.actions .primary { width: 118px; background: #00a1b2; }
.cursor { position: fixed; left: 788px; top: 774px; }
```
